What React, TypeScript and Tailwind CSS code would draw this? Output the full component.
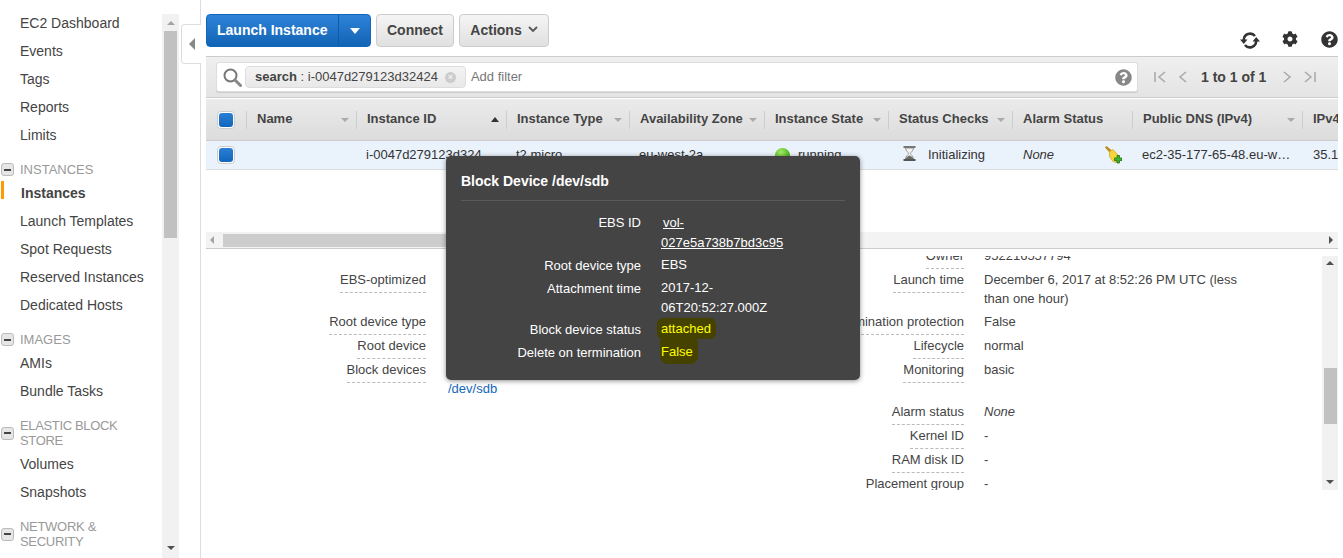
import React from "react";
import { FaCog, FaQuestionCircle } from "react-icons/fa";

const navTop = ["EC2 Dashboard", "Events", "Tags", "Reports", "Limits"];

const sections = [
  { title: ["INSTANCES"], track: "", items: ["Instances", "Launch Templates", "Spot Requests", "Reserved Instances", "Dedicated Hosts"] },
  { title: ["IMAGES"], track: "", items: ["AMIs", "Bundle Tasks"] },
  { title: ["ELASTIC BLOCK", "STORE"], track: "tracking-[-0.35px]", items: ["Volumes", "Snapshots"] },
  { title: ["NETWORK &", "SECURITY"], track: "tracking-[-0.3px]", items: [] as string[] },
];

const columns = [
  { label: "Name", sort: "down" },
  { label: "Instance ID", sort: "up" },
  { label: "Instance Type", sort: "down" },
  { label: "Availability Zone", sort: "down" },
  { label: "Instance State", sort: "down" },
  { label: "Status Checks", sort: "down" },
  { label: "Alarm Status", sort: "" },
  { label: "Public DNS (IPv4)", sort: "down" },
];

const gridCols = "grid grid-cols-[40px_110px_150px_123px_135px_124px_124px_120px_170px_36px]";

const NavItem = ({ label, active }: { label: string; active?: boolean }) => (
  <div className="relative h-7 pl-5 leading-7 text-[14px] text-[#444]">
    {active && <div className="absolute left-px top-[2px] h-[18px] w-[3px] bg-[#f90]" />}
    <span className={active ? "font-bold pl-px" : ""}>{label}</span>
  </div>
);

const Checkbox = () => (
  <div className="flex h-[18px] w-[18px] items-center justify-center rounded-[4px] border border-[#ccc] bg-white">
    <div className="h-[14px] w-[14px] rounded-[3px] bg-gradient-to-b from-[#2a7fd5] to-[#1166bb]" />
  </div>
);

const SortArrow = ({ dir }: { dir: string }) =>
  dir === "up" ? (
    <div className="h-0 w-0 border-x-[4px] border-b-[5px] border-x-transparent border-b-[#333]" />
  ) : (
    <div className="h-0 w-0 border-x-[4px] border-t-[4px] border-x-transparent border-t-[#aaa]" />
  );

const RefreshIcon = () => (
  <svg width="20" height="17" viewBox="0 0 20 17" fill="none" className="mt-[3px]">
    <path d="M3.800 8A6.300 6.300 0 0 1 15 4" stroke="#333" strokeWidth="2.600" />
    <path d="M16.200 9A6.300 6.300 0 0 1 5 13" stroke="#333" strokeWidth="2.600" />
    <path d="M0 7.500h7.500L3.800 12z" fill="#333" />
    <path d="M20 9.500h-7.500L16.200 5z" fill="#333" />
  </svg>
);

const SearchIcon = () => (
  <svg width="19" height="19" viewBox="0 0 19 19" fill="none">
    <circle cx="7.500" cy="7.500" r="6" stroke="#777" strokeWidth="2" />
    <path d="M12 12l5.500 5.500" stroke="#888" strokeWidth="3" strokeLinecap="round" />
  </svg>
);

const Hourglass = () => (
  <svg width="13" height="15" viewBox="0 0 13 15" className="mb-[4px]">
    <path d="M2.500 2h8c0 3-3 4-3 5.500s3 2.500 3 5.500h-8c0-3 3-4 3-5.500S2.500 5 2.500 2z" fill="#f2f2ee" stroke="#999" />
    <path d="M2.500 13c.5-2 3-3 4-3.500 1 .5 3.500 1.500 4 3.500z" fill="#6b6b66" />
    <path d="M.5 1h12" stroke="#777" strokeWidth="2" />
    <path d="M.5 14h12" stroke="#555" strokeWidth="2" />
  </svg>
);

const BroomPlus = () => (
  <svg width="17" height="18" viewBox="0 0 17 18">
    <path d="M0 1.500L1.500 0l5.500 4.500-2 2.500z" fill="#c08a1e" />
    <path d="M4.500 5.500L8 3.500l5 5.500-1.500 7.500-3.500-1-3.500-5z" fill="#f4d63a" stroke="#cfa020" strokeWidth=".7" />
    <path d="M9.500 12h2.500V9.500h2.500V12H17v2.500h-2.500V17H12v-2.500H9.500z" fill="#3fb52a" stroke="#17640e" strokeWidth=".7" />
  </svg>
);

const PagerIcon = ({ d }: { d: string }) => (
  <svg width="14" height="14" viewBox="0 0 14 14" fill="none">
    <path d={d} stroke="#a8a8a8" strokeWidth="1.500" />
  </svg>
);

const Detail = ({
  label,
  children,
  labelW,
}: {
  label?: string;
  children?: React.ReactNode;
  labelW: string;
}) => (
  <div className="flex min-h-6 shrink-0 text-[13px] leading-[19px]">
    <div className={`${labelW} shrink-0 text-right`}>
      {label && <span className="inline-block border-b border-dashed border-[#bbb] pb-[3px] text-[#444]">{label}</span>}
    </div>
    <div className="w-[270px] text-[#444]">{children}</div>
  </div>
);

const PopRow = ({ label, children }: { label: string; children: React.ReactNode }) => (
  <div className="flex text-[13px] leading-[20px] text-white">
    <div className="w-[180px] shrink-0 text-right">{label}</div>
    <div className="-mt-px ml-5 w-[150px]">{children}</div>
  </div>
);

export default function App() {
  return (
    <div className="relative flex h-[558px] w-[1343px] overflow-hidden bg-white font-['Liberation_Sans',Arial,sans-serif]">
      {/* sidebar */}
      <div className="w-[162px] shrink-0 overflow-hidden pt-[9px]">
        {navTop.map((n) => (
          <NavItem key={n} label={n} />
        ))}
        {sections.map((s) => (
          <div key={s.title[0]} className="mt-[13px]">
            <div className="flex items-center pb-[2px] pl-px">
              <div className="flex h-[13px] w-[13px] items-center justify-center rounded-[3px] border border-[#bbb] bg-[#e6e6e6]">
                <div className="h-[2px] w-[7px] bg-[#444]" />
              </div>
              <div className={`${s.track} ml-[6px] text-[13px] leading-[15px] text-[#999]`}>
                {s.title.map((t) => (
                  <div key={t}>{t}</div>
                ))}
              </div>
            </div>
            {s.items.map((n) => (
              <NavItem key={n} label={n} active={n === "Instances"} />
            ))}
          </div>
        ))}
      </div>

      {/* sidebar scrollbar */}
      <div className="mt-[14px] flex w-[17px] shrink-0 flex-col items-center bg-[#f1f1f1]">
        <div className="mb-[4px] mt-[7px] h-0 w-0 border-x-[4px] border-b-[4px] border-x-transparent border-b-[#a3a3a3]" />
        <div className="mt-[2px] h-[207px] w-[13px] bg-[#c1c1c1]" />
        <div className="mt-auto mb-[8px] h-0 w-0 border-x-[4px] border-t-[4px] border-x-transparent border-t-[#505050]" />
      </div>

      {/* collapse gutter */}
      <div className="relative w-[22px] shrink-0 border-r border-[#ddd]">
        <div className="absolute left-[2px] top-[24px] flex h-[40px] w-[20px] items-center justify-center rounded-l-[4px] border border-r-0 border-[#ddd] bg-white">
          <div className="h-0 w-0 border-y-[6px] border-r-[6px] border-y-transparent border-r-[#888]" />
        </div>
      </div>

      {/* main */}
      <div className="ml-[5px] flex w-[1132px] shrink-0 flex-col">
        {/* toolbar */}
        <div className="flex h-[56px] shrink-0 items-start pt-[14px] text-[14px] font-bold">
          <div className="flex h-[33px] w-[165px] rounded-[4px] border border-[#1166bb] bg-gradient-to-b from-[#2e83d8] to-[#1163b5] text-white">
            <div className="flex flex-1 items-center pl-[10px]">Launch Instance</div>
            <div className="flex w-[32px] items-center justify-center border-l border-[#0f5ba8]">
              <div className="h-0 w-0 border-x-[5px] border-t-[6px] border-x-transparent border-t-white" />
            </div>
          </div>
          <div className="ml-[5px] flex h-[33px] w-[78px] items-center justify-center rounded-[4px] border border-[#ccc] bg-gradient-to-b from-[#f5f5f5] to-[#e0e0e0] text-[#444]">
            Connect
          </div>
          <div className="ml-[5px] flex h-[33px] w-[90px] items-center justify-center gap-[6px] rounded-[4px] border border-[#ccc] bg-gradient-to-b from-[#f5f5f5] to-[#e0e0e0] text-[#444]">
            Actions
            <svg width="10" height="7" viewBox="0 0 10 7" fill="none" className="mb-[3px]">
              <path d="M1 1l4 4 4-4" stroke="#555" strokeWidth="1.800" />
            </svg>
          </div>
          <div className="ml-auto flex items-center pt-[15px]">
            <RefreshIcon />
            <FaCog className="ml-[22px] h-[16px] w-[16px] text-[#333]" />
            <FaQuestionCircle className="ml-[23px] h-[17px] w-[17px] text-[#333]" />
          </div>
        </div>

        {/* filter bar */}
        <div className="flex h-[42px] shrink-0 items-center border-y border-[#ccc] bg-gradient-to-b from-[#efefef] to-[#e4e4e4] pl-[10px]">
          <div className="flex h-[30px] w-[922px] items-center rounded-[3px] border border-[#ddd] bg-white pl-[6px] shadow-[0_1px_0_#ccc]">
            <SearchIcon />
            <div className="ml-[3px] flex h-[22px] items-center rounded-[4px] border border-[#ddd] bg-gradient-to-b from-[#f4f4f4] to-[#e8e8e8] px-[9px] text-[13px] text-[#444]">
              <span className="font-bold">search</span>
              <span>&nbsp;: i-0047d279123d32424</span>
              <span className="ml-[7px] flex h-[11px] w-[11px] items-center justify-center rounded-full bg-[#ccc] text-[9px] leading-none text-white">
                ×
              </span>
            </div>
            <span className="ml-[5px] text-[13px] text-[#777]">Add filter</span>
            <FaQuestionCircle className="ml-auto mr-[5px] h-[17px] w-[17px] text-[#888]" />
          </div>
          <div className="ml-[15px] flex items-center text-[14px] font-bold text-[#444]">
            <PagerIcon d="M2 2v10M12 2L6 7l6 5" />
            <div className="ml-[9px]">
              <PagerIcon d="M10 2L4 7l6 5" />
            </div>
            <span className="ml-[11px]">1 to 1 of 1</span>
            <div className="ml-[14px]">
              <PagerIcon d="M4 2l6 5-6 5" />
            </div>
            <div className="ml-[9px]">
              <PagerIcon d="M2 2l6 5-6 5M12 2v10" />
            </div>
          </div>
        </div>

        {/* table header */}
        <div className={`${gridCols} h-[43px] shrink-0 overflow-hidden border-t border-white border-b border-b-[#ccc] bg-gradient-to-b from-[#ebebeb] to-[#dcdcdc] text-[13px] font-bold text-[#444]`}>
          <div className="flex items-center pl-[11px]">
            <Checkbox />
          </div>
          {columns.map((c) => (
            <div key={c.label} className="flex items-center">
              <div className="flex h-[18px] flex-1 items-center border-l border-[#ccc] pl-[10px] pr-[7px]">
                <span className="mb-[2px] whitespace-nowrap">{c.label}</span>
                {c.sort && (
                  <div className="ml-auto">
                    <SortArrow dir={c.sort} />
                  </div>
                )}
              </div>
            </div>
          ))}
          <div className="flex items-center">
            <div className="flex h-[18px] flex-1 items-center overflow-hidden border-l border-[#ccc] pl-[10px]">
              <span className="mb-[2px]">IPv4</span>
            </div>
          </div>
        </div>

        {/* selected row */}
        <div className={`${gridCols} h-[29px] shrink-0 items-center overflow-hidden border-b border-[#ddd] bg-[#eaf2fc] text-[13px] text-[#333]`}>
          <div className="pl-[11px]">
            <Checkbox />
          </div>
          <div />
          <div className="pl-[10px]">i-0047d279123d324</div>
          <div className="pl-[10px]">t2.micro</div>
          <div className="pl-[10px]">eu-west-2a</div>
          <div className="flex items-center pl-[11px]">
            <div className="h-[15px] w-[15px] rounded-full bg-[radial-gradient(circle_at_40%_30%,#a8ee6a,#3fae12_70%)]" />
            <span className="ml-2">running</span>
          </div>
          <div className="flex items-center pl-[15px]">
            <Hourglass />
            <span className="ml-[12px]">Initializing</span>
          </div>
          <div className="flex items-center pl-[11px] pr-[10px]">
            <span className="italic">None</span>
            <div className="ml-auto mb-[1px]">
              <BroomPlus />
            </div>
          </div>
          <div className="whitespace-nowrap pl-[10px]">ec2-35-177-65-48.eu-w…</div>
          <div className="overflow-hidden whitespace-nowrap pl-[11px]">35.17</div>
        </div>

        {/* horizontal scrollbar */}
        <div className="mt-[62px] flex h-[17px] shrink-0 items-center border-b border-[#ccc] bg-[#f3f3f3]">
          <div className="ml-[4px] h-0 w-0 border-y-[4px] border-r-[4px] border-y-transparent border-r-[#a3a3a3]" />
          <div className="ml-[9px] h-[13px] w-[400px] bg-[#cdcdcd]" />
          <div className="ml-auto mr-[5px] h-0 w-0 border-y-[4px] border-l-[4px] border-y-transparent border-l-[#505050]" />
        </div>

        {/* details */}
        <div className="mt-[7px] flex h-[234px] shrink-0 overflow-hidden">
          <div className="-mt-[10px] flex flex-1">
            <div className="flex w-[564px] shrink-0 flex-col">
              <div className="h-6 shrink-0" />
              <Detail label="EBS-optimized" labelW="w-[220px] mr-[22px]" />
              <div className="h-[18px] shrink-0" />
              <Detail label="Root device type" labelW="w-[220px] mr-[22px]" />
              <Detail label="Root device" labelW="w-[220px] mr-[22px]" />
              <Detail label="Block devices" labelW="w-[220px] mr-[22px]">
                <div className="mt-[19px] text-[#1166bb]">/dev/sdb</div>
              </Detail>
            </div>
            <div className="flex flex-col">
              <Detail label="Owner" labelW="w-[194px] mr-[20px]">
                952216557794
              </Detail>
              <Detail label="Launch time" labelW="w-[194px] mr-[20px]">
                <div className="pb-[4px]">December 6, 2017 at 8:52:26 PM UTC (less than one hour)</div>
              </Detail>
              <Detail label="Termination protection" labelW="w-[194px] mr-[20px]">
                False
              </Detail>
              <Detail label="Lifecycle" labelW="w-[194px] mr-[20px]">
                normal
              </Detail>
              <Detail label="Monitoring" labelW="w-[194px] mr-[20px]">
                basic
              </Detail>
              <div className="h-[18px] shrink-0" />
              <Detail label="Alarm status" labelW="w-[194px] mr-[20px]">
                <span className="italic">None</span>
              </Detail>
              <Detail label="Kernel ID" labelW="w-[194px] mr-[20px]">
                -
              </Detail>
              <Detail label="RAM disk ID" labelW="w-[194px] mr-[20px]">
                -
              </Detail>
              <Detail label="Placement group" labelW="w-[194px] mr-[20px]">
                -
              </Detail>
            </div>
          </div>
          <div className="flex w-[16px] shrink-0 flex-col items-center bg-[#f1f1f1]">
            <div className="mt-[5px] h-0 w-0 border-x-[4px] border-b-[4px] border-x-transparent border-b-[#505050]" />
            <div className="mt-[103px] h-[56px] w-[13px] bg-[#c1c1c1]" />
            <div className="mt-auto mb-[6px] h-0 w-0 border-x-[4px] border-t-[4px] border-x-transparent border-t-[#505050]" />
          </div>
        </div>
      </div>

      {/* popover */}
      <div className="absolute left-[446px] top-[156px] h-[224px] w-[414px] rounded-[5px] bg-[#444] px-[15px] shadow-[0_1px_5px_rgba(0,0,0,0.45)]">
        <div className="flex h-[45px] items-center border-b border-[#5a5a5a] pt-[6px] text-[14px] font-bold text-white">
          Block Device /dev/sdb
        </div>
        <div className="mt-[12px] flex flex-col gap-[3px]">
          <PopRow label="EBS ID">
            <a className="block pt-px underline">
              <span className="pl-[2px]">vol-</span>
              <br />
              027e5a738b7bd3c95
            </a>
          </PopRow>
          <PopRow label="Root device type">EBS</PopRow>
          <PopRow label="Attachment time">
            2017-12-
            <br />
            06T20:52:27.000Z
          </PopRow>
          <div className="-mt-px">
            <PopRow label="Block device status">
              <span className="-ml-[4px] -mt-px block w-[59px] rounded-[6px] bg-[#454200] pl-[4px] pt-px text-[#ff0]">attached</span>
            </PopRow>
          </div>
          <PopRow label="Delete on termination">
            <span className="-ml-px -mt-[3px] block w-[38px] rounded-b-[8px] rounded-tr-[4px] bg-[#454200] pb-[2px] pl-px pt-[3px] text-[#ff0]">False</span>
          </PopRow>
        </div>
      </div>
    </div>
  );
}
